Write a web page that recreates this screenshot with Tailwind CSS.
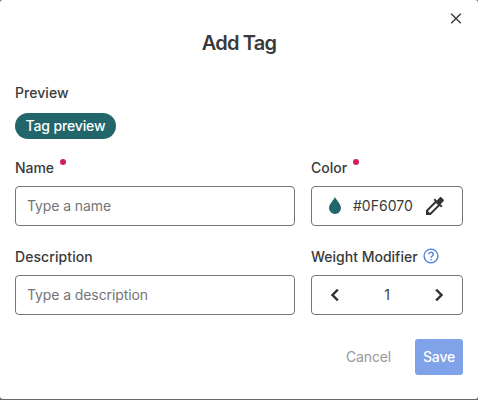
<!DOCTYPE html>
<html lang="en">
<head>
<meta charset="utf-8">
<title>Add Tag</title>
<script src="https://cdn.jsdelivr.net/npm/@tailwindcss/browser@4"></script>
</head>
<body class="bg-[#686868] font-['Inter',sans-serif] text-sm leading-5 text-[#3a3a3a]">
<main class="relative flex h-[399px] w-[478px] flex-col overflow-hidden rounded-[3px] bg-white px-[15px]">
  <button class="absolute top-3 right-4 size-3" aria-label="Close">
    <svg class="block size-3" viewBox="0 0 12 12" fill="none" stroke="#3a3a3a" stroke-width="1.4"><path d="M1.2 1.700l9.600 9.600M10.800 1.700l-9.600 9.600"/></svg>
  </button>
  <h1 class="mt-[29px] text-center text-xl leading-7 font-semibold tracking-[-0.8px]">Add Tag</h1>
  <div class="mt-[26px] font-medium tracking-[0.05px]">Preview</div>
  <div class="mt-[10px] flex h-[26px] w-[101px] items-center justify-center rounded-full bg-[#22666c] font-medium tracking-[-0.15px] text-white">Tag preview</div>
  <div class="mt-[19px] grid grid-cols-[280px_152px] gap-x-4">
    <div>
      <label class="flex h-5 gap-[6px] font-medium tracking-[-0.05px]">Name<span class="mt-px size-[6px] rounded-full bg-[#cf1f5c]"></span></label>
      <div class="mt-2 flex h-10 items-center rounded-[4px] border border-[#757575] px-[11px]"><input class="w-full tracking-[-0.1px] outline-none placeholder:text-[#757575]" placeholder="Type a name"></div>
    </div>
    <div>
      <label class="flex h-5 gap-[6px] font-medium">Color<span class="mt-px size-[6px] rounded-full bg-[#cf1f5c]"></span></label>
      <div class="mt-2 flex h-10 items-center rounded-[4px] border border-[#757575] pr-[15px] pl-[17px]">
        <svg class="mb-px h-[17px] w-3" viewBox="0 0 12 17" fill="#22666c"><path d="M6 0C5.200 2.500 0 7 0 11a6 6 0 0 0 12 0C12 7 6.800 2.500 6 0z"/></svg>
        <span class="ml-3">#0F6070</span>
        <svg class="ml-auto size-6" viewBox="0 0 24 24" fill="#333"><path d="M20.710 5.630l-2.340-2.340c-.39-.39-1.020-.39-1.410 0l-3.120 3.120-1.930-1.910-1.410 1.410 1.420 1.420L3 16.250V21h4.750l8.920-8.920 1.420 1.420 1.410-1.410-1.920-1.920 3.120-3.120c.4-.4.4-1.030.01-1.420zM6.920 19L5 17.080l8.060-8.060 1.920 1.920L6.920 19z"/></svg>
      </div>
    </div>
  </div>
  <div class="mt-[21px] grid grid-cols-[280px_152px] gap-x-4">
    <div>
      <label class="block h-5 font-medium tracking-[0.08px]">Description</label>
      <div class="mt-2 flex h-10 items-center rounded-[4px] border border-[#757575] px-[11px]"><input class="w-full tracking-[-0.1px] outline-none placeholder:text-[#757575]" placeholder="Type a description"></div>
    </div>
    <div>
      <label class="flex h-5 items-center gap-[5px] font-medium whitespace-nowrap">Weight Modifier
        <svg class="mb-[2px] size-4 shrink-0" viewBox="0 0 16 16" fill="none" stroke="#4a80d9" stroke-width="1.4"><circle cx="8" cy="8" r="6.900"/><path d="M5.800 6.500a2.200 2.100 0 1 1 3.300 1.700C8.300 8.700 8 9 8 9.800M8 10.900v1.400"/></svg>
      </label>
      <div class="mt-2 flex h-10 items-center justify-between rounded-[4px] border border-[#757575] px-[11px]">
        <svg class="size-6" viewBox="0 0 24 24" fill="#333" stroke="#333" stroke-width="0.5"><path d="M15.410 7.410L14 6l-6 6 6 6 1.410-1.410L10.830 12z"/></svg>
        <span>1</span>
        <svg class="size-6" viewBox="0 0 24 24" fill="#333" stroke="#333" stroke-width="0.5"><path d="M10 6L8.590 7.410 13.170 12l-4.580 4.590L10 18l6-6z"/></svg>
      </div>
    </div>
  </div>
  <div class="mt-6 flex justify-end gap-3">
    <button class="h-9 px-3 tracking-[-0.15px] text-[#979797]">Cancel</button>
    <button class="h-9 w-12 rounded-[3px] bg-[#80a2e9] font-medium tracking-[-0.2px] text-white">Save</button>
  </div>
</main>
</body>
</html>
